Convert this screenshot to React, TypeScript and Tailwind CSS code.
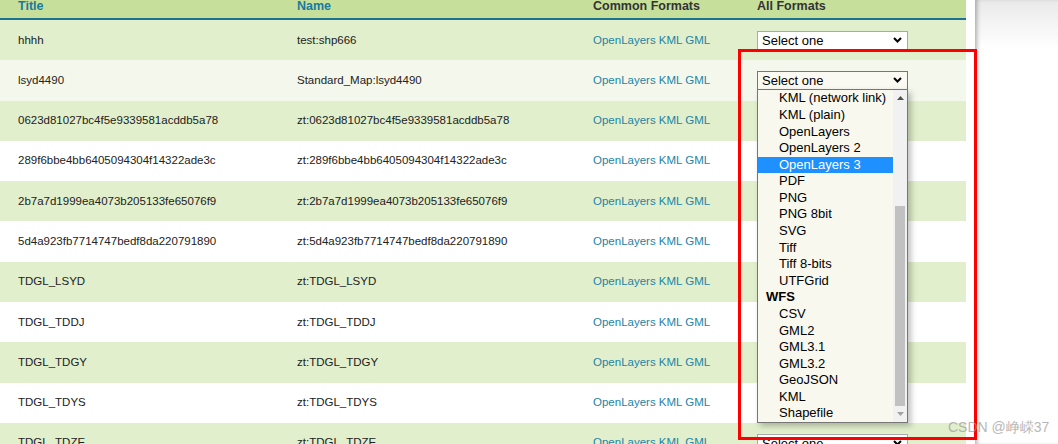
import React from 'react'

const ROWS: [string, string][] = [
  ['hhhh', 'test:shp666'],
  ['lsyd4490', 'Standard_Map:lsyd4490'],
  ['0623d81027bc4f5e9339581acddb5a78', 'zt:0623d81027bc4f5e9339581acddb5a78'],
  ['289f6bbe4bb6405094304f14322ade3c', 'zt:289f6bbe4bb6405094304f14322ade3c'],
  ['2b7a7d1999ea4073b205133fe65076f9', 'zt:2b7a7d1999ea4073b205133fe65076f9'],
  ['5d4a923fb7714747bedf8da220791890', 'zt:5d4a923fb7714747bedf8da220791890'],
  ['TDGL_LSYD', 'zt:TDGL_LSYD'],
  ['TDGL_TDDJ', 'zt:TDGL_TDDJ'],
  ['TDGL_TDGY', 'zt:TDGL_TDGY'],
  ['TDGL_TDYS', 'zt:TDGL_TDYS'],
  ['TDGL_TDZE', 'zt:TDGL_TDZE'],
]

// options visible in the open list (list is scrolled a bit)
const OPTIONS: { label: string; group?: boolean; selected?: boolean }[] = [
  { label: 'KML (network link)' },
  { label: 'KML (plain)' },
  { label: 'OpenLayers' },
  { label: 'OpenLayers 2' },
  { label: 'OpenLayers 3', selected: true },
  { label: 'PDF' },
  { label: 'PNG' },
  { label: 'PNG 8bit' },
  { label: 'SVG' },
  { label: 'Tiff' },
  { label: 'Tiff 8-bits' },
  { label: 'UTFGrid' },
  { label: 'WFS', group: true },
  { label: 'CSV' },
  { label: 'GML2' },
  { label: 'GML3.1' },
  { label: 'GML3.2' },
  { label: 'GeoJSON' },
  { label: 'KML' },
  { label: 'Shapefile' },
]

const COLS = 'grid grid-cols-[279px_296px_164px_227px]'

function Chevron() {
  return (
    <svg width="9" height="6" viewBox="0 0 9 6" className="shrink-0">
      <polyline points="1,1 4.5,4.5 8,1" fill="none" stroke="#000" strokeWidth="2" />
    </svg>
  )
}

function Select({ open }: { open?: boolean }) {
  return (
    <div className="relative">
      <div
        className={
          open
            ? 'flex h-[19px] w-[151px] items-center justify-between border border-[#767676] bg-[#fafaf3] pl-[4px] pr-[5px]'
            : 'flex h-[19px] w-[151px] items-center justify-between border border-[#a9a9a9] bg-white pl-[4px] pr-[5px]'
        }
      >
        <span className="text-[13px] leading-none text-black">Select one</span>
        <Chevron />
      </div>

      {open && (
        <div className="absolute left-0 top-[18px] z-10 flex h-[334px] w-[151px] border border-[#767676] bg-[#f9f8ef] shadow-[3px_3px_6px_rgba(0,0,0,0.25)]">
          {/* Options */}
          <div className="flex-1 overflow-hidden pt-[0.5px] text-[13px] leading-[16.58px] text-black">
            {OPTIONS.map(o =>
              o.group ? (
                <div key={o.label} className="h-[16.58px] pl-[8px] font-bold">
                  {o.label}
                </div>
              ) : (
                <div
                  key={o.label}
                  className={
                    o.selected
                      ? 'h-[16.58px] bg-[#1e90ff] pl-[21px] text-white'
                      : 'h-[16.58px] pl-[21px]'
                  }
                >
                  {o.label}
                </div>
              ),
            )}
          </div>

          {/* Scrollbar */}
          <div className="flex w-[14px] flex-col bg-[#f1f1f1]">
            <div className="flex h-[16px] items-center justify-center">
              <svg width="7" height="4" viewBox="0 0 7 4">
                <polygon points="0,4 3.5,0 7,4" fill="#505050" />
              </svg>
            </div>
            <div className="h-[100px]" />
            <div className="mx-[2px] h-[200px] bg-[#c1c1c1]" />
            <div className="flex flex-1 items-center justify-center">
              <svg width="7" height="4" viewBox="0 0 7 4">
                <polygon points="0,0 7,0 3.5,4" fill="#a3a3a3" />
              </svg>
            </div>
          </div>
        </div>
      )}
    </div>
  )
}

export default function App() {
  return (
    <div
      className="relative flex h-[444px] w-[1058px] overflow-hidden bg-white"
      style={{ fontFamily: '"Liberation Sans", Arial, sans-serif' }}
    >
      {/* Layer table */}
      <div className="w-[975px] shrink-0">
        <div className="w-[966px]">
          {/* Header */}
          <div className={`${COLS} h-[20px] border-b-2 border-[#1d7290] bg-[#c6e09c] text-[12.5px] font-bold leading-none`}>
            <div className="pl-[18px] text-[#1a7a9c]">Title</div>
            <div className="pl-[18px] text-[#1a7a9c]">Name</div>
            <div className="pl-[18px] text-[#333]">Common Formats</div>
            <div className="pl-[18px] text-[#333]">All Formats</div>
          </div>

          {/* Rows */}
          {ROWS.map(([title, name], i) => (
            <div
              key={name}
              className={`${COLS} h-[40.3px] items-center text-[11.5px] ${
                i === 1 ? 'bg-[#f4f8ec]' : i % 2 === 0 ? 'bg-[#e1efcc]' : 'bg-white'
              }`}
            >
              <div className="pl-[18px] text-[#222]">{title}</div>
              <div className="pl-[18px] text-[#222]">{name}</div>
              <div className="pl-[18px] text-[#2384a6]">OpenLayers KML GML</div>
              <div className="pl-[18px]">
                {/* selects of rows 3-10 sit under the open list */}
                {(i < 2 || i > 9) && <Select open={i === 1} />}
              </div>
            </div>
          ))}
        </div>
      </div>

      {/* Side panel */}
      <div className="flex-1 bg-[linear-gradient(to_bottom,#e9e9e9,#ffffff_48px)] shadow-[inset_4px_0_4px_-2px_rgba(0,0,0,0.3)]" />

      {/* Annotation box */}
      <div className="pointer-events-none absolute left-[738px] top-[49px] h-[391px] w-[239px] border-[3px] border-[#ff0000]" />

      {/* Watermark */}
      <div className="pointer-events-none absolute left-[948px] top-[417px] text-[14px] text-[#9a9a9a] opacity-70">
        CSDN @峥嵘37
      </div>
    </div>
  )
}
